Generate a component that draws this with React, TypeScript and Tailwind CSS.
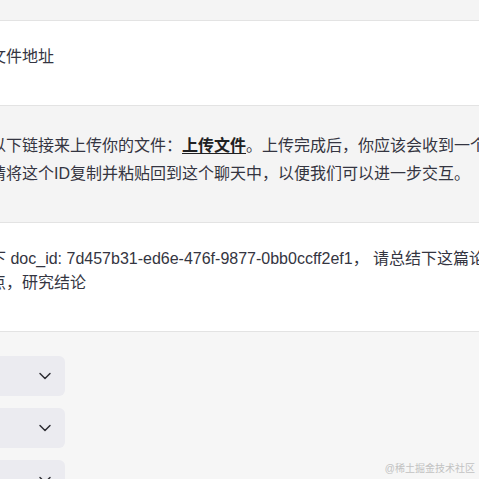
import { ChevronDown } from "lucide-react";

const font = { fontFamily: '"Liberation Sans", "Noto Sans CJK SC", sans-serif' };

const App = () => {
    return (
        <div
            className="relative h-[479px] w-[479px] overflow-hidden bg-[#f6f6f6] text-[16px] text-[#343541]"
            style={font}
        >
            <div className="h-[21px] border-b border-[#e3e3e3] bg-[#f4f4f4]" />

            {/* user message */}
            <div className="border-b border-[#e3e3e3] bg-white pt-[24px] pb-[36px]">
                <p className="ml-[-10px] whitespace-nowrap leading-[24px]">文件地址</p>
            </div>

            {/* assistant reply */}
            <div className="border-b border-[#e3e3e3] bg-[#f4f4f4] pt-[26px] pb-[34px]">
                <p className="ml-[-10px] whitespace-nowrap leading-[28px]">
                    以下链接来上传你的文件：
                    <a className="font-bold text-[#202123] underline underline-offset-2">上传文件</a>
                    。上传完成后，你应该会收到一个
                </p>
                <p className="ml-[-10px] whitespace-nowrap leading-[28px]">
                    请将这个ID复制并粘贴回到这个聊天中，以便我们可以进一步交互。
                </p>
            </div>

            {/* user message */}
            <div className="border-b border-[#e3e3e3] bg-white pt-[24px] pb-[36px]">
                <p className="ml-[-10px] whitespace-nowrap leading-[24px]">
                    下 doc_id: 7d457b31-ed6e-476f-9877-0bb0ccff2ef1， 请总结下这篇论文
                </p>
                <p className="ml-[-10px] whitespace-nowrap leading-[24px]">点，研究结论</p>
            </div>

            <div className="flex flex-col gap-[12px] pt-[24px]">
                {[0, 1, 2].map((i) => (
                    <div
                        key={i}
                        className="ml-[-20px] flex h-[40px] w-[85px] items-center justify-end rounded-md bg-[#ebebf0] pr-[10px]"
                    >
                        <ChevronDown size={20} strokeWidth={1.75} className="text-[#2d2d33]" />
                    </div>
                ))}
            </div>

            <span className="absolute right-[4px] bottom-[5px] text-[10px] leading-none text-[#c2c2c2]">
                @稀土掘金技术社区
            </span>
        </div>
    );
};

export default App;
